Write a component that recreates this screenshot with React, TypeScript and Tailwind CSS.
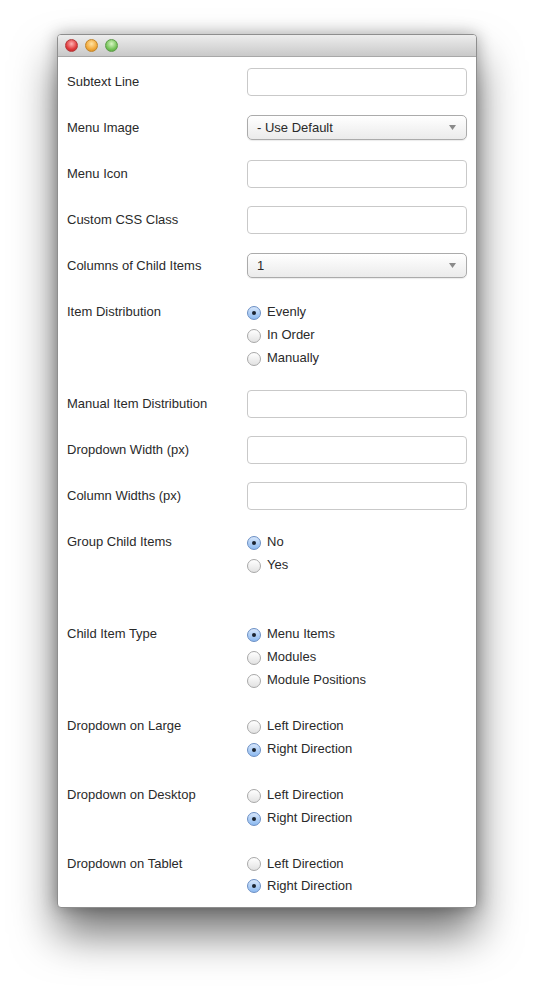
import React from 'react';

// One form row: label on the left, control(s) on the right
type Row =
  | { label: string; kind: 'input'; h: number }
  | { label: string; kind: 'select'; value: string; h: number }
  | { label: string; kind: 'radio'; options: string[]; checked: number; h: number };

const ROWS: Row[] = [
  { label: 'Subtext Line', kind: 'input', h: 46 },
  { label: 'Menu Image', kind: 'select', value: '- Use Default', h: 46 },
  { label: 'Menu Icon', kind: 'input', h: 46 },
  { label: 'Custom CSS Class', kind: 'input', h: 46 },
  { label: 'Columns of Child Items', kind: 'select', value: '1', h: 46 },
  { label: 'Item Distribution', kind: 'radio', options: ['Evenly', 'In Order', 'Manually'], checked: 0, h: 92 },
  { label: 'Manual Item Distribution', kind: 'input', h: 46 },
  { label: 'Dropdown Width (px)', kind: 'input', h: 46 },
  { label: 'Column Widths (px)', kind: 'input', h: 46 },
  { label: 'Group Child Items', kind: 'radio', options: ['No', 'Yes'], checked: 0, h: 92 },
  { label: 'Child Item Type', kind: 'radio', options: ['Menu Items', 'Modules', 'Module Positions'], checked: 0, h: 92 },
  { label: 'Dropdown on Large', kind: 'radio', options: ['Left Direction', 'Right Direction'], checked: 1, h: 69 },
  { label: 'Dropdown on Desktop', kind: 'radio', options: ['Left Direction', 'Right Direction'], checked: 1, h: 69 },
  { label: 'Dropdown on Tablet', kind: 'radio', options: ['Left Direction', 'Right Direction'], checked: 1, h: 46 },
];

function Radio({ on }: { on: boolean }) {
  return on ? (
    <span className="mt-[2px] w-[14px] h-[14px] rounded-full border border-[#6b8fc4] bg-gradient-to-b from-[#d6e6fb] to-[#8dbaf0] flex items-center justify-center shrink-0">
      <span className="w-[4px] h-[4px] rounded-full bg-[#1b2430]" />
    </span>
  ) : (
    <span className="mt-[2px] w-[14px] h-[14px] rounded-full border border-[#a8a8a8] bg-gradient-to-b from-white to-[#e2e2e2] shrink-0" />
  );
}

function Control({ row }: { row: Row }) {
  if (row.kind === 'input') {
    return <div className="w-[220px] h-[28px] rounded-[4px] border border-[#c9c9c9] bg-white" />;
  }
  if (row.kind === 'select') {
    return (
      <div className="mt-[1px] w-[220px] h-[25px] rounded-[5px] border border-[#ababab] bg-gradient-to-b from-white to-[#ebebeb] flex items-center justify-between pl-[9px] pr-[10px] shadow-[0_1px_1px_rgba(0,0,0,0.08)]">
        <span className="text-[13px] text-[#2a2a2a]">{row.value}</span>
        <svg width="7" height="5" viewBox="0 0 7 5">
          <path d="M0 0 H7 L3.5 5 Z" fill="#8a8a8a" />
        </svg>
      </div>
    );
  }
  return (
    <div className="mt-[2px] flex flex-col">
      {row.options.map((opt, i) => (
        <div key={opt} className="h-[23px] flex items-center gap-[6px]">
          <Radio on={i === row.checked} />
          <span className="text-[13px] text-[#2a2a2a] leading-none">{opt}</span>
        </div>
      ))}
    </div>
  );
}

export default function App() {
  return (
    <div className="w-[534px] h-[986px] bg-white font-['Liberation_Sans',Arial,sans-serif] pt-[34px] pl-[57px]">
      <div className="w-[420px] rounded-[4px] shadow-[0_26px_44px_rgba(0,0,0,0.55),0_0_16px_rgba(0,0,0,0.3)] border border-[#8e8e8e] overflow-hidden bg-white">
        {/* Title bar */}
        <div className="h-[22px] bg-gradient-to-b from-[#ededed] to-[#c9c9c9] border-b border-[#a8a8a8] flex items-center gap-[7px] pl-[7px]">
          <span className="w-[13px] h-[13px] rounded-full border border-[#b23a3a] bg-[radial-gradient(circle_at_50%_35%,#ffb3b3,#e0393b_60%,#b52124)]" />
          <span className="w-[13px] h-[13px] rounded-full border border-[#c1852a] bg-[radial-gradient(circle_at_50%_35%,#ffe3a3,#f2a93a_60%,#c9811c)]" />
          <span className="w-[13px] h-[13px] rounded-full border border-[#5e9b4a] bg-[radial-gradient(circle_at_50%_35%,#d8f5c4,#76c459_60%,#4b9a35)]" />
        </div>

        {/* Form */}
        <div className="pt-[11px] pl-[9px] pr-[9px] pb-[11px]">
          {ROWS.map(row => (
            <div key={row.label} className="flex" style={{ height: row.h }}>
              <div className="w-[180px] h-[28px] flex items-center text-[13px] text-[#2a2a2a]">{row.label}</div>
              <Control row={row} />
            </div>
          ))}
        </div>
      </div>
    </div>
  );
}
